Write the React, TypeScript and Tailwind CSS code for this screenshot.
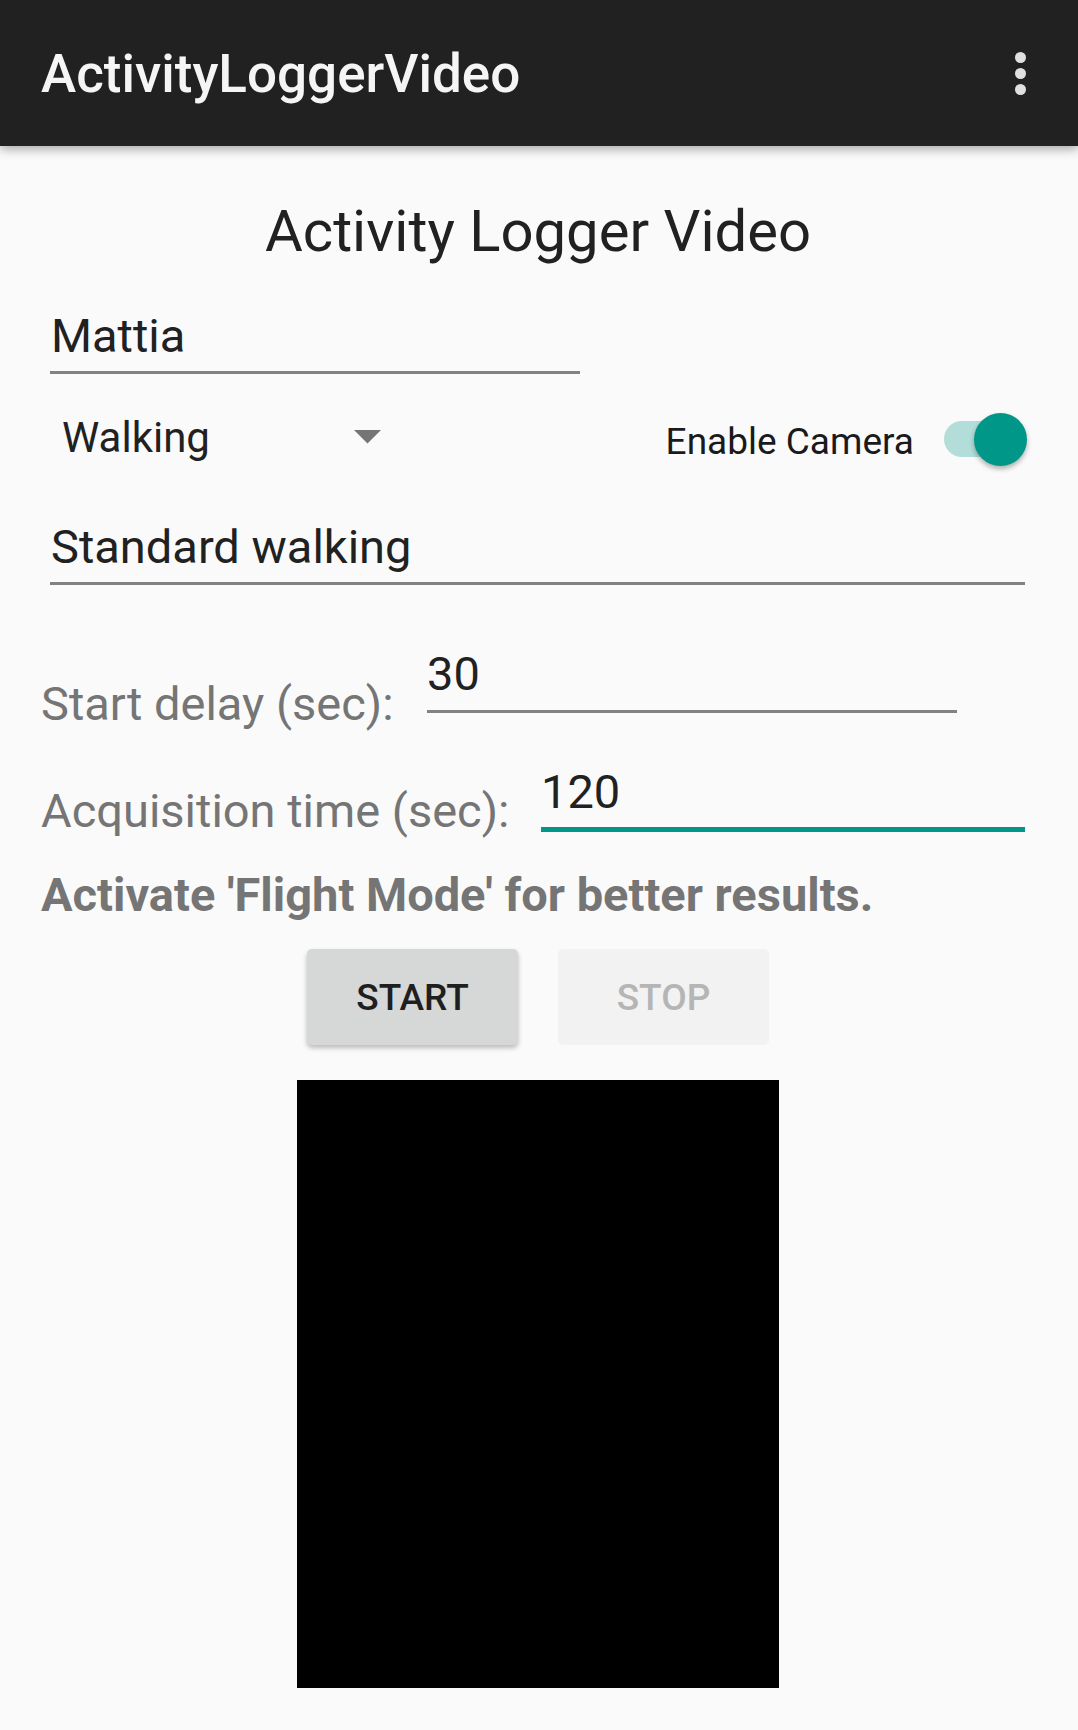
import React from "react";

export default function App() {
  return (
    <div className="w-[1078px] h-[1730px] bg-[#fafafa] overflow-hidden font-['Roboto',sans-serif] text-[#212121]">
      <header className="relative z-10 h-[146px] bg-[#212121] shadow-[0_3px_10px_rgba(0,0,0,0.35)] flex items-start justify-between pl-[41px] pr-[52px]">
        <h1 className="mt-[48px] text-[53px] leading-none font-medium text-[#f5f5f5]">ActivityLoggerVideo</h1>
        <div className="mt-[52px] flex flex-col gap-[5px]">
          <span className="block w-[11px] h-[11px] rounded-full bg-[#e0e0e0]" />
          <span className="block w-[11px] h-[11px] rounded-full bg-[#e0e0e0]" />
          <span className="block w-[11px] h-[11px] rounded-full bg-[#e0e0e0]" />
        </div>
      </header>

      <main className="flex flex-col">
        <h2 className="mt-[56px] text-center text-[58px] leading-none text-[#212121] pr-[2px]">Activity Logger Video</h2>

        <div className="mt-[52px] ml-[50px] w-[530px]">
          <div className="text-[47px] leading-none pl-[1px]">Mattia</div>
          <div className="mt-[12px] h-[3px] bg-[#828282]" />
        </div>

        <div className="mt-[39px] h-[53px] flex items-start pl-[50px] pr-[51px]">
          <div className="w-[331px] flex items-start">
            <span className="mt-[4px] pl-[12px] text-[42px] leading-none">Walking</span>
            <svg className="ml-auto mt-[17px]" width="27" height="14" viewBox="0 0 27 14">
              <polygon points="0,0 27,0 13.5,13.5" fill="#757575" />
            </svg>
          </div>
          <div className="ml-auto flex items-start">
            <span className="mt-[10px] text-[37px] leading-none text-[#1a1a1a]">Enable Camera</span>
            <div className="relative ml-[30px] w-[83px] h-[53px]">
              <div className="absolute left-0 top-[8px] w-[66px] h-[36px] rounded-full bg-[#b2ddd9]" />
              <div className="absolute right-0 top-0 w-[53px] h-[53px] rounded-full bg-[#009688] shadow-[0_3px_5px_rgba(0,0,0,0.3)]" />
            </div>
          </div>
        </div>

        <div className="mt-[57px] ml-[50px] w-[975px]">
          <div className="text-[47px] leading-none pl-[1px]">Standard walking</div>
          <div className="mt-[12px] h-[3px] bg-[#828282]" />
        </div>

        <div className="mt-[65px] flex items-start pl-[41px]">
          <span className="mt-[30px] text-[47px] leading-none text-[#757575]">Start delay (sec):</span>
          <div className="ml-auto mr-[121px] w-[530px]">
            <div className="text-[47px] leading-none">30</div>
            <div className="mt-[13px] h-[3px] bg-[#828282]" />
          </div>
        </div>

        <div className="mt-[41px] flex items-start pl-[41px]">
          <span className="mt-[19px] text-[47px] leading-none text-[#757575]">Acquisition time (sec):</span>
          <div className="ml-auto mr-[53px] w-[484px]">
            <div className="text-[47px] leading-none">120</div>
            <div className="mt-[12px] h-[5px] bg-[#009688]" />
          </div>
        </div>

        <p className="mt-[37px] pl-[41px] text-[47px] leading-none font-bold text-[#757575]">Activate 'Flight Mode' for better results.</p>

        <div className="mt-[31px] flex justify-center gap-[40px] pr-[2px]">
          <button className="w-[211px] h-[96px] rounded-[5px] bg-[#d6d7d7] shadow-[0_3px_5px_rgba(0,0,0,0.25)] text-[37px] font-medium text-[#1f1f1f] leading-none">START</button>
          <button className="w-[211px] h-[96px] rounded-[5px] bg-[#f2f2f2] text-[37px] font-medium text-[#b5b5b5] leading-none">STOP</button>
        </div>

        <div className="mt-[35px] ml-[297px] w-[482px] h-[608px] bg-black" />
      </main>
    </div>
  );
}
